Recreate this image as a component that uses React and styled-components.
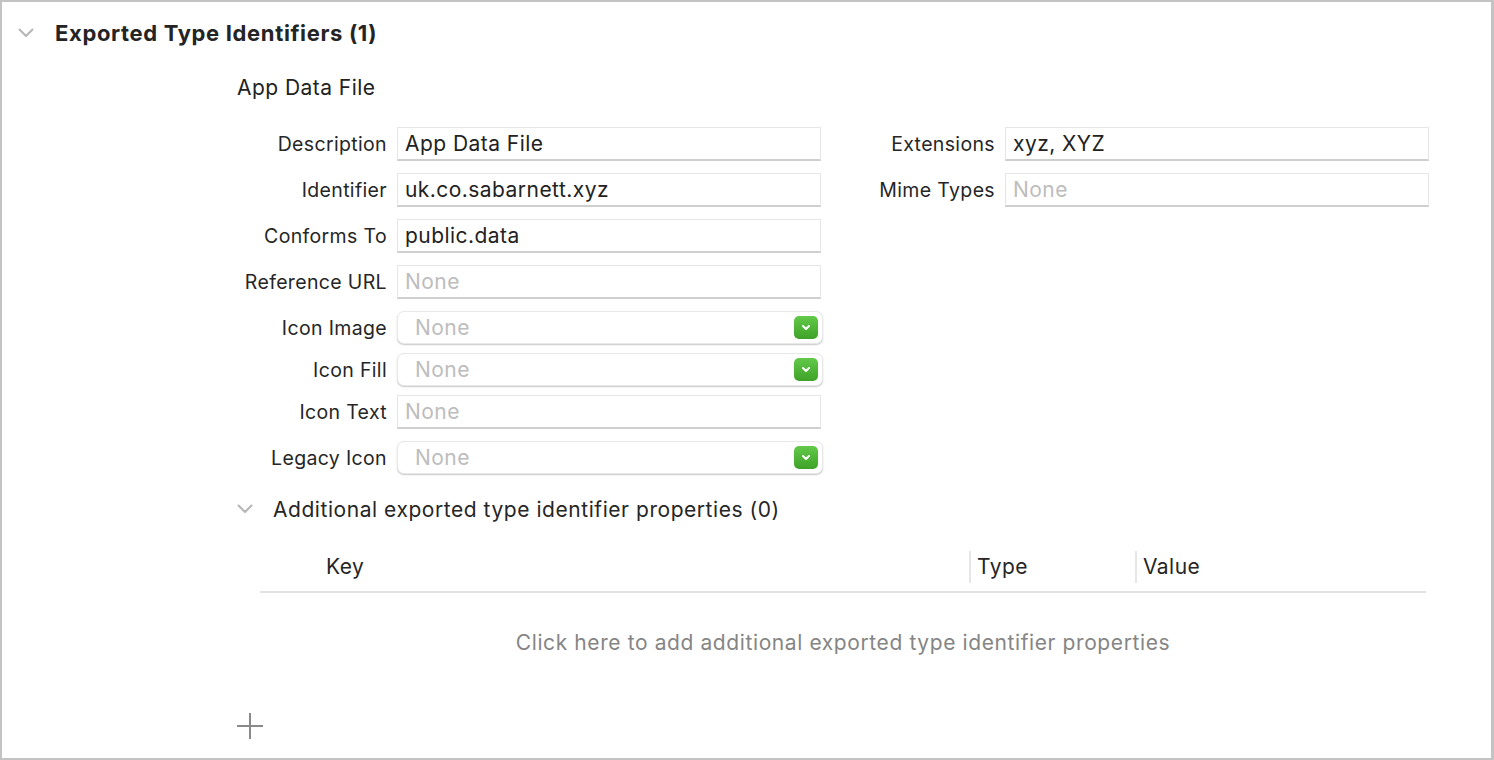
import React from 'react'
import styled, { createGlobalStyle } from 'styled-components'

const GlobalStyle = createGlobalStyle`
  html, body {
    margin: 0;
    padding: 0;
    background: #ffffff;
  }
  body {
    font-family: Inter, "Liberation Sans", sans-serif;
    color: #222222;
  }
`

const Frame = styled.div`
  width: 1494px;
  height: 760px;
  box-sizing: border-box;
  border: 2px solid #c3c3c3;
  border-right-width: 3px;
  background: #ffffff;
  display: flex;
  flex-direction: column;
`

const SectionHeader = styled.div`
  display: flex;
  align-items: center;
  height: 30px;
  margin-top: 16px;
  padding-left: 16px;
`

const Chevron = styled.svg`
  width: ${p => p.size || 16}px;
  height: ${p => (p.size || 16) * 0.6}px;
  flex: none;
`

const SectionTitle = styled.h1`
  margin: 0 0 0 21px;
  font-size: 22px;
  letter-spacing: 0.65px;
  font-weight: 700;
  color: #242424;
`

const Content = styled.div`
  padding-left: 233px;
  display: flex;
  flex-direction: column;
`

const Subtitle = styled.div`
  font-size: 21px;
  letter-spacing: 0.45px;
  height: 30px;
  line-height: 30px;
  margin-top: 25px;
  margin-left: 2px;
`

const FormColumns = styled.div`
  display: flex;
  gap: 22px;
  margin-top: 24px;
`

const FormColumn = styled.div`
  display: flex;
  flex-direction: column;
`

const Row = styled.div`
  display: flex;
  align-items: center;
  gap: 10px;
  height: ${p => (p.popup ? 33 : 34)}px;
  margin-bottom: ${p => (p.popup ? 9 : 12)}px;
`

const Label = styled.div`
  width: ${p => p.width}px;
  text-align: right;
  font-size: 19.5px;
  letter-spacing: 0.35px;
  color: #262626;
  white-space: nowrap;
`

const TextField = styled.div`
  width: 424px;
  height: 34px;
  box-sizing: border-box;
  border: 1px solid #e6e6e6;
  border-bottom: 2px solid #cfcfcf;
  background: #ffffff;
  display: flex;
  align-items: center;
  padding-left: 7px;
  font-size: 21px;
  letter-spacing: 0.45px;
  color: ${p => (p.placeholder ? '#bdbdbd' : '#222222')};
`

const PopUp = styled.div`
  width: 426px;
  height: 33px;
  box-sizing: border-box;
  border: 1px solid #e8e8e8;
  border-radius: 7px;
  box-shadow: 0 1px 1.5px rgba(0, 0, 0, 0.22);
  background: #ffffff;
  display: flex;
  align-items: center;
  justify-content: space-between;
  padding: 0 4px 0 17px;
  font-size: 21px;
  letter-spacing: 0.45px;
  color: #bdbdbd;
`

const PopUpButton = styled.div`
  width: 24px;
  height: 23px;
  border-radius: 5px;
  background: linear-gradient(#63c94a, #3da228);
  display: flex;
  align-items: center;
  justify-content: center;
`

const SubHeader = styled.div`
  display: flex;
  align-items: center;
  height: 30px;
  margin-top: 11px;
  margin-left: 2px;
`

const SubTitle = styled.div`
  margin-left: 20px;
  font-size: 21px;
  letter-spacing: 0.55px;
  color: #262626;
`

const Table = styled.div`
  margin-left: 25px;
  width: 1166px;
  display: flex;
  flex-direction: column;
`

const TableHead = styled.div`
  display: flex;
  align-items: center;
  height: 48px;
  margin-top: 19px;
  border-bottom: 2px solid #e3e3e3;
`

const HeadCell = styled.div`
  width: ${p => (p.width ? `${p.width}px` : 'auto')};
  flex: ${p => (p.width ? 'none' : '1')};
  box-sizing: border-box;
  padding-left: ${p => p.pad}px;
  font-size: 21px;
  letter-spacing: 0.45px;
  color: #262626;
  height: 32px;
  line-height: 32px;
  border-left: ${p => (p.divider ? '2px solid #e6e6e6' : 'none')};
`

const EmptyMessage = styled.div`
  text-align: center;
  font-size: 21px;
  letter-spacing: 0.6px;
  color: #858585;
  height: 30px;
  line-height: 30px;
  margin-top: 35px;
`

const AddButton = styled.svg`
  width: 28px;
  height: 28px;
  margin-top: 54px;
  margin-left: 1px;
`

const DownChevron = ({ color = '#b5b5b5', size = 16, stroke = 2 }) => (
  <Chevron size={size} viewBox="0 0 16 9.6">
    <path d="M1.5 1.5 L8 8 L14.5 1.5" fill="none" stroke={color} strokeWidth={stroke} strokeLinecap="round" strokeLinejoin="round" />
  </Chevron>
)

const PopUpControl = ({ value }) => (
  <PopUp>
    <span>{value}</span>
    <PopUpButton>
      <svg width="10" height="7" viewBox="0 0 10 7">
        <path d="M2 2 L5 5 L8 2" fill="none" stroke="#ffffff" strokeWidth="2" strokeLinecap="round" strokeLinejoin="round" />
      </svg>
    </PopUpButton>
  </PopUp>
)

const leftFields = [
  { label: 'Description', value: 'App Data File' },
  { label: 'Identifier', value: 'uk.co.sabarnett.xyz' },
  { label: 'Conforms To', value: 'public.data' },
  { label: 'Reference URL', placeholder: 'None' },
  { label: 'Icon Image', popup: true, placeholder: 'None' },
  { label: 'Icon Fill', popup: true, placeholder: 'None' },
  { label: 'Icon Text', placeholder: 'None' },
  { label: 'Legacy Icon', popup: true, placeholder: 'None' },
]

const rightFields = [
  { label: 'Extensions', value: 'xyz, XYZ' },
  { label: 'Mime Types', placeholder: 'None' },
]

const FieldRow = ({ field, labelWidth }) => (
  <Row popup={field.popup}>
    <Label width={labelWidth}>{field.label}</Label>
    {field.popup ? (
      <PopUpControl value={field.placeholder} />
    ) : (
      <TextField placeholder={!field.value}>{field.value || field.placeholder}</TextField>
    )}
  </Row>
)

export default function App() {
  return (
    <>
      <GlobalStyle />
      <Frame>
        <SectionHeader>
          <DownChevron />
          <SectionTitle>Exported Type Identifiers (1)</SectionTitle>
        </SectionHeader>
        <Content>
          <Subtitle>App Data File</Subtitle>
          <FormColumns>
            <FormColumn>
              {leftFields.map(f => (
                <FieldRow key={f.label} field={f} labelWidth={152} />
              ))}
            </FormColumn>
            <FormColumn>
              {rightFields.map(f => (
                <FieldRow key={f.label} field={f} labelWidth={150} />
              ))}
            </FormColumn>
          </FormColumns>
          <SubHeader>
            <DownChevron />
            <SubTitle>Additional exported type identifier properties (0)</SubTitle>
          </SubHeader>
          <Table>
            <TableHead>
              <HeadCell width={709} pad={66}>Key</HeadCell>
              <HeadCell width={166} pad={6} divider>Type</HeadCell>
              <HeadCell pad={6} divider>Value</HeadCell>
            </TableHead>
            <EmptyMessage>Click here to add additional exported type identifier properties</EmptyMessage>
          </Table>
          <AddButton viewBox="0 0 28 28">
            <path d="M14 1 V27 M1 14 H27" stroke="#8a8a8a" strokeWidth="2" fill="none" />
          </AddButton>
        </Content>
      </Frame>
    </>
  )
}
